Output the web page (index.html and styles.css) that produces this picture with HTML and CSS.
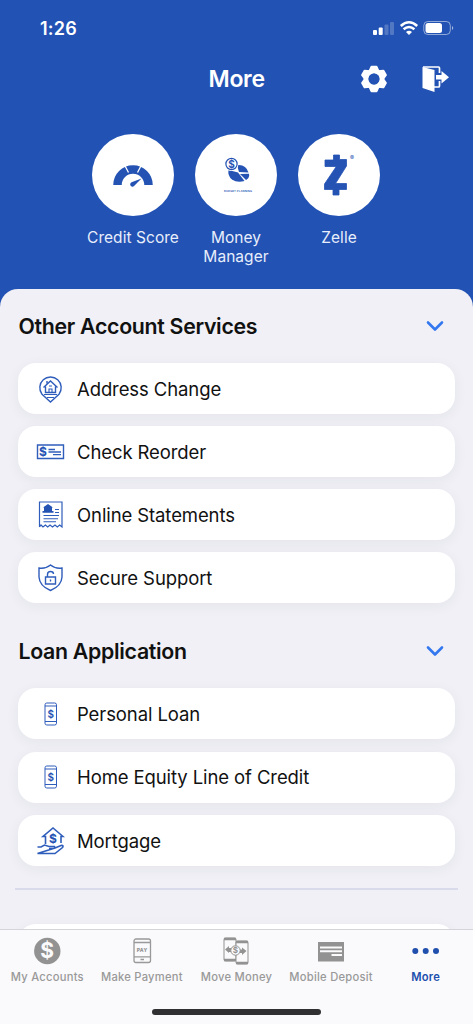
FILE: index.html
```html
<!DOCTYPE html>
<html lang="en">
<head>
<meta charset="utf-8">
<title>More</title>
<link rel="stylesheet" href="styles.css">
</head>
<body>
<div class="app">
  <header class="hero">
    <div class="status">
      <span class="time">1:26</span>
      <svg class="status-icons" width="82" height="16" viewBox="0 0 82 16" fill="#fff">
        <rect x="0" y="10" width="4" height="5" rx="1"/><rect x="5.700" y="7.500" width="4" height="7.500" rx="1"/>
        <rect x="11.500" y="4.500" width="4" height="10.500" rx="1" opacity=".22"/><rect x="17" y="2" width="4" height="13" rx="1" opacity=".22"/>
        <g fill="none" stroke="#fff" stroke-width="2.600"><path d="M27.800 6Q36 -1.500 44.200 6M30.600 9.300Q36 4.700 41.400 9.300"/></g><path d="M33 12Q36 9.400 39 12L36 15Z"/>
        <rect x="50.800" y="1.500" width="26.500" height="13" rx="4" fill="none" stroke="#fff" opacity=".5"/><rect x="52.500" y="3" width="16.500" height="10" rx="2.500"/><path d="M79 6q2.500 2 0 4z" opacity=".6"/>
      </svg>
    </div>
    <div class="navbar">
      <h1 class="nav-title">More</h1>
      <svg class="nav-icon gear" width="26" height="28" viewBox="-13 -14 26 28">
        <circle r="7.900" fill="none" stroke="#fff" stroke-width="4.800"/>
        <g fill="#fff"><path id="tooth" d="M-5.500 -8L-3.500 -12.500Q-3.200 -13.300 -2.400 -13.300H2.400Q3.200 -13.300 3.500 -12.500L5.500 -8Z"/><use href="#tooth" transform="rotate(60)"/><use href="#tooth" transform="rotate(120)"/><use href="#tooth" transform="rotate(180)"/><use href="#tooth" transform="rotate(240)"/><use href="#tooth" transform="rotate(300)"/></g>
        <circle r="5.400" fill="#2252b3"/>
      </svg>
      <svg class="nav-icon" width="28" height="28" viewBox="0 0 28 28">
        <path d="M1.500 2L13.500 5V27L1.500 23Z" fill="#fff"/><path d="M2 2H17.500Q18.500 2 18.500 3V8M18.500 16V21Q18.500 22 17.500 22H13" fill="none" stroke="#fff" stroke-width="1.700"/><path d="M15 10H20.500V6L28 12.200L20.500 18.500V14.500H15Z" fill="#fff"/>
      </svg>
    </div>
    <div class="shortcuts">
      <div class="shortcut"><div class="disc">
        <svg width="82" height="82" viewBox="0 0 82 82"><path d="M25.500 51A15.500 15.500 0 0 1 56.500 51" fill="none" stroke="#2453b4" stroke-width="8.500"/><path d="M31.500 29L36.500 38.500M50.500 29L45.500 38.500" stroke="#fff" stroke-width="1.300"/><path d="M39.500 48.300L49.500 44.500L42.500 51.500A2.300 2.300 0 1 1 39.500 48.300Z" fill="#2453b4"/></svg>
      </div><span>Credit Score</span></div>
      <div class="shortcut"><div class="disc">
        <svg width="82" height="82" viewBox="0 0 82 82"><g fill="#2453b4"><path d="M42 31Q51 30 53.500 38.500L44 38Z"/><path d="M33.500 36L43 38.500L49.500 47Q42 49 37 45.500Q32.500 42 33.500 36Z"/><path d="M45 40L54 39.800Q55 43.500 51 46Z"/></g><circle cx="36.500" cy="30" r="7" fill="#fff"/><circle cx="36.500" cy="30" r="5.600" fill="#fff" stroke="#2453b4" stroke-width="1.200"/><text x="36.500" y="33.700" class="coin">$</text><text x="43" y="58.300" class="planner" textLength="28">BUDGET PLANNING</text></svg>
      </div><span>Money<br>Manager</span></div>
      <div class="shortcut"><div class="disc">
        <svg width="82" height="82" viewBox="0 0 82 82"><path d="M35.500 21H41.500V25.500H48.500V32L37.500 49.500H48.500V55.500H41V61H35V55.500H26.500V50L38.300 32.500H27V26H35.500Z" fill="#2453b4" stroke="#2453b4" stroke-width=".8" stroke-linejoin="round"/><text x="54" y="26" class="registered">®</text></svg>
      </div><span>Zelle</span></div>
    </div>
  </header>

  <main class="sheet">
    <section class="group">
      <div class="group-head"><h2>Other Account Services</h2><svg class="chevron" width="18" height="12" viewBox="0 0 18 12"><path d="M2 2.500L9 9.500L16 2.500"/></svg></div>
      <div class="row"><svg class="row-icon" viewBox="0 0 30 30"><path d="M7 20.200A10.700 10.700 0 1 1 24 20.200L15.500 28Z"/><path d="M9 20.500H22M12 23.500H19" stroke-width="1"/><path d="M8.500 13.500L15.500 7L22.500 13.500M10.500 12.500V18.500H20.500V12.500M12 9.500V7"/><path d="M14 18V15H17V18M14 12H17" stroke-width="1.100"/></svg><span>Address Change</span></div>
      <div class="row"><svg class="row-icon" viewBox="0 0 30 30"><path d="M2.500 8H28.500V21.500H2.500Z"/><text x="8" y="19" class="dollar">$</text><path d="M13.500 12.500H20M13.500 15H26M18 17.700H26" stroke-width="1.300"/></svg><span>Check Reorder</span></div>
      <div class="row"><svg class="row-icon" viewBox="0 0 30 30"><path d="M4.500 27V2H27V27L24.700 25L22.300 27L20 25L17.500 27L15 25L12.700 27L10.400 25L8 27L6 25L4.500 27" stroke-width="1.200"/><path d="M8 7.500L13 4L18 7.500H17V11H18.500V12.700H7.500V11H9V7.500Z" fill="#2453b4" stroke="none"/><path d="M20 9.500H24M20 12.500H24M8.500 15.500H24M8.500 18.700H23M8.500 21.700H21" stroke-width="1.100"/></svg><span>Online Statements</span></div>
      <div class="row"><svg class="row-icon" viewBox="0 0 30 30"><path d="M15.500 2Q20.500 6 27 5V14Q26.500 23 15.500 27.500Q4.500 23 4 14V5Q10.500 6 15.500 2Z"/><path d="M10.500 14H20.500V21H10.500ZM12.500 14V11.500Q12.500 8.500 15.500 8.500Q18.500 8.500 18.500 11"/><path d="M15.500 16.500V18.500"/></svg><span>Secure Support</span></div>
    </section>
    <section class="group second">
      <div class="group-head"><h2>Loan Application</h2><svg class="chevron" width="18" height="12" viewBox="0 0 18 12"><path d="M2 2.500L9 9.500L16 2.500"/></svg></div>
      <div class="row"><svg class="row-icon phone" viewBox="0 0 30 30"><rect x="10" y="4" width="11.500" height="22" rx="1.800"/><path d="M10 7H21.500M10 22.500H21.500"/><text x="15.800" y="18.500" class="dollar small">$</text></svg><span>Personal Loan</span></div>
      <div class="row"><svg class="row-icon phone" viewBox="0 0 30 30"><rect x="10" y="4" width="11.500" height="22" rx="1.800"/><path d="M10 7H21.500M10 22.500H21.500"/><text x="15.800" y="18.500" class="dollar small">$</text></svg><span>Home Equity Line of Credit</span></div>
      <div class="row"><svg class="row-icon" viewBox="0 0 30 30"><path d="M10.500 18V10.500H8L18 2L28 10.500H26V17M2.500 21H6L9.500 19L14 20.500H19.500Q20.500 22.500 18.500 22.500H14M20 22L26 19.500Q29 19 27.500 21.500L20 27.500H2.500Z" stroke-width="1.600"/><text x="18" y="16.500" class="dollar">$</text></svg><span>Mortgage</span></div>
    </section>
    <hr class="divider">
    <div class="row next-row"></div>
  </main>

  <nav class="tabs">
    <div class="tab-list">
      <div class="tab"><svg width="28" height="28" viewBox="0 0 28 28"><circle cx="14.300" cy="14" r="13.200" fill="#929292"/><text x="14.300" y="21.300" class="account-dollar">$</text></svg><span>My Accounts</span></div>
      <div class="tab"><svg width="28" height="28" viewBox="0 0 28 28" fill="none" stroke="#999" stroke-width="1.300"><rect x="6" y="2" width="16.500" height="23.500" rx="2"/><path d="M6 5.500H22.500M6 19.800H22.500M12.500 22.500H16" /><text x="14.200" y="14.700" class="pay">PAY</text></svg><span>Make Payment</span></div>
      <div class="tab"><svg width="28" height="28" viewBox="0 0 28 28" fill="#929292" stroke="#929292"><rect x="2" y="1" width="12" height="23" rx="1.500" fill="#fafafc"/><path d="M2 2H14M2 23H14" stroke-width="2.500"/><rect x="14" y="4" width="12" height="23" rx="1.500" fill="#fafafc"/><path d="M14 5H26M14 26H26" stroke-width="2.500"/><path d="M3 12.500L7 9V11H10V15H7V16ZM24.500 14L20 10.500V12.500H16V16H20V18Z" stroke="none"/><circle cx="13.500" cy="13.500" r="4.700" fill="#fafafc"/><text x="13.500" y="16.300" class="transfer">$</text></svg><span>Move Money</span></div>
      <div class="tab"><svg width="28" height="28" viewBox="0 0 28 28"><rect x="1" y="5" width="26" height="19.500" fill="#929292"/><path d="M3 10.500H25M3 14.300H25M14.500 18H25" stroke="#fafafc" stroke-width="2"/></svg><span>Mobile Deposit</span></div>
      <div class="tab active"><svg width="28" height="28" viewBox="0 0 28 28" fill="#214fae"><circle cx="3.300" cy="14" r="3"/><circle cx="13.700" cy="14" r="3"/><circle cx="24" cy="14" r="3"/></svg><span>More</span></div>
    </div>
    <div class="home-bar"></div>
  </nav>
</div>
</body>
</html>
```
FILE: styles.css
```css
* { box-sizing: border-box; }
body { margin: 0; font-family: Inter, "Liberation Sans", sans-serif; color: #111; }
h1, h2 { margin: 0; font-weight: 600; }
svg { display: block; flex: none; }
.app { width: 473px; height: 1024px; display: flex; flex-direction: column; overflow: hidden; background: #2252b3; }
.hero { height: 289px; flex: none; color: #fff; }
.status { height: 56px; display: flex; align-items: center; justify-content: space-between; padding: 0 18px 0 40px; }
.time { font-size: 18px; font-weight: 600; letter-spacing: .2px; }
.navbar { height: 46px; display: grid; grid-template-columns: 361px 26px 62px; align-items: center; }
.nav-title { font-size: 23px; padding-left: 208.500px; letter-spacing: -.3px; }
.navbar .nav-icon:last-child { margin-left: 34px; }
.shortcuts { display: flex; justify-content: center; gap: 5px; padding: 32px 1px 0 0; }
.shortcut { width: 98px; display: flex; flex-direction: column; align-items: center; text-align: center; font-size: 15.500px; line-height: 19px; letter-spacing: .05px; color: #e8eefb; white-space: nowrap; }
.shortcut > span { margin-top: 12px; }
.disc { width: 82px; height: 82px; border-radius: 50%; background: #fff; }
.coin { font-size: 10px; font-weight: 700; fill: #2453b4; text-anchor: middle; }
.planner { font-size: 2.700px; font-weight: 600; fill: #2453b4; text-anchor: middle; }
.registered { font-size: 6px; fill: #2453b4; text-anchor: middle; }
.sheet { flex: 1; min-height: 0; overflow: hidden; background: #f0f0f6; border-radius: 18px 18px 0 0; padding: 0 18px; }
.group { display: flex; flex-direction: column; gap: 12px; padding-top: 12px; }
.group.second { padding-top: 23px; }
.group-head { height: 50px; display: flex; align-items: center; justify-content: space-between; padding: 0 11px 0 .5px; }
.group-head h2 { font-size: 21.300px; letter-spacing: -.3px; }
.group-head h2 { line-height: 24px; }
.chevron path { fill: none; stroke: #3478f0; stroke-width: 2.600; stroke-linecap: round; stroke-linejoin: round; }
.row { height: 51px; flex: none; display: flex; align-items: center; gap: 12px; padding-left: 17px; border-radius: 18px; background: #fff; box-shadow: 0 3px 14px rgba(30, 30, 60, .055); font-size: 18.500px; letter-spacing: -.1px; }
.second .row { margin-top: .4px; }
.row-icon { width: 30px; height: 30px; fill: none; stroke: #2f5dbb; stroke-width: 1.400; }
.phone { stroke-width: 1; }
.dollar { font-size: 12px; font-weight: 700; fill: #2453b4; stroke: none; text-anchor: middle; }
.dollar.small { font-size: 10px; font-weight: 600; }
.divider { height: 1.500px; margin: 22px -3px 34.500px; border: 0; background: #d9dbea; }
.tabs { height: 95px; flex: none; background: #fafafc; border-top: 1px solid #d5d5d9; display: flex; flex-direction: column; align-items: center; }
.tab-list { width: 100%; height: 79px; display: grid; grid-template-columns: repeat(5, 1fr); padding-top: 7px; }
.tab { display: flex; flex-direction: column; align-items: center; gap: 4.500px; color: #999; font-size: 11.200px; font-weight: 500; line-height: 15px; letter-spacing: .25px; white-space: nowrap; }
.tab.active { color: #214fae; font-weight: 600; }
.account-dollar { font-size: 21px; font-weight: 700; fill: #fafafc; text-anchor: middle; }
.pay { font-size: 5px; font-weight: 800; fill: #929292; stroke: none; text-anchor: middle; }
.transfer { font-size: 8px; font-weight: 700; stroke: none; text-anchor: middle; }
.home-bar { width: 169px; height: 6px; border-radius: 3px; background: #303033; }
```
